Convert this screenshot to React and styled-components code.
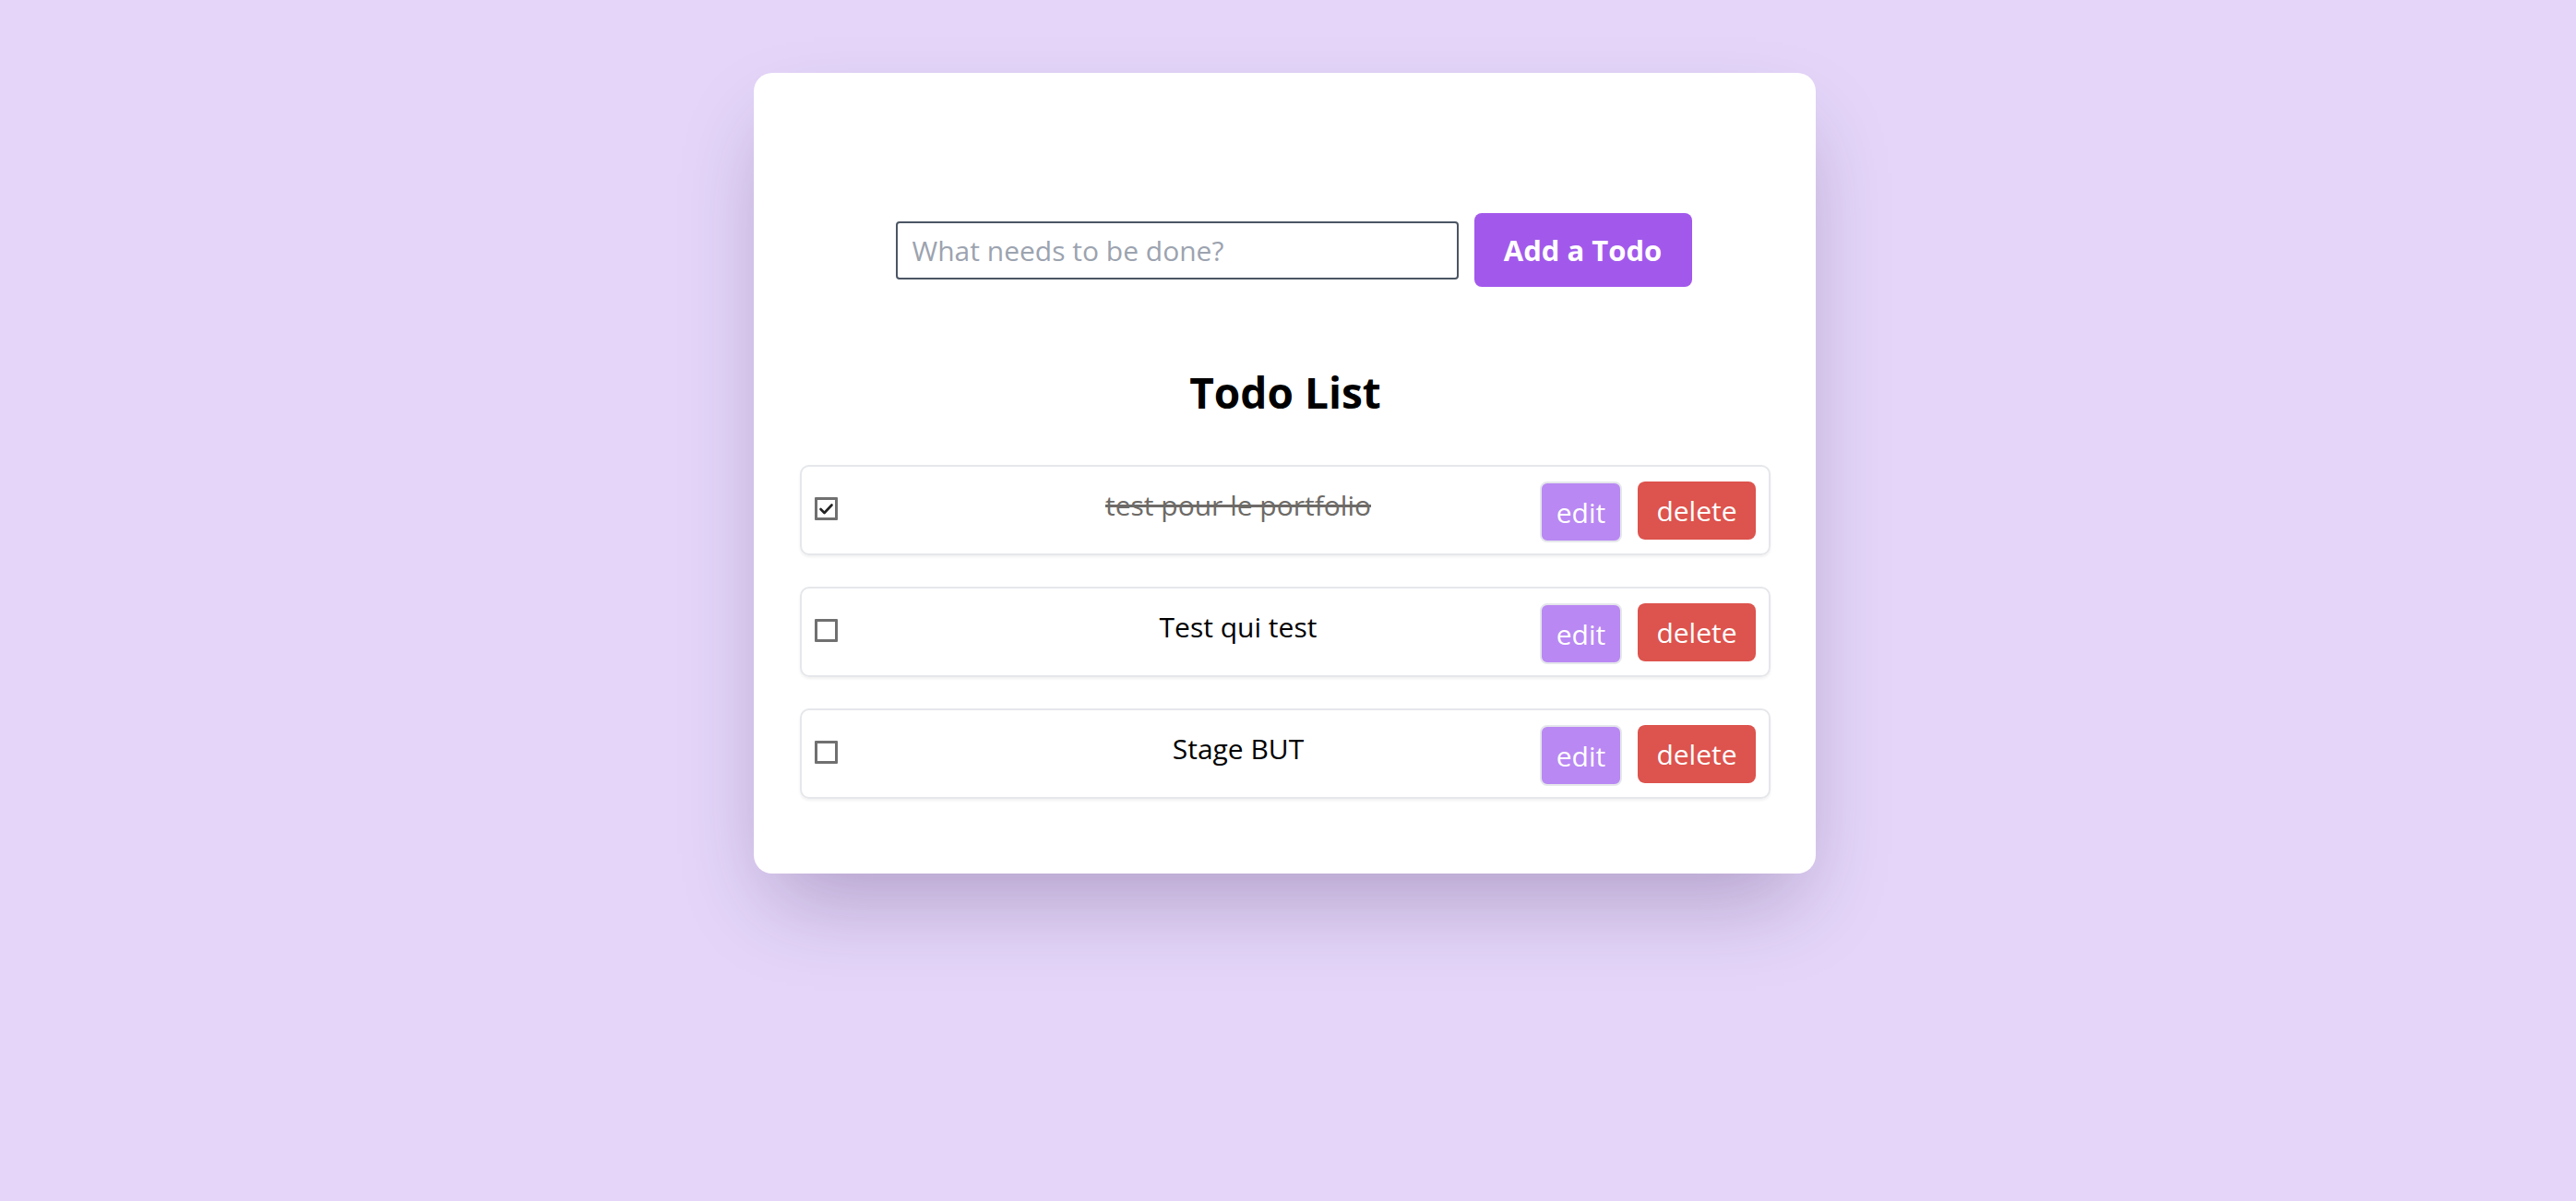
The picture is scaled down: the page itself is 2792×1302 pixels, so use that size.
import React from "react";
import styled, { createGlobalStyle } from "styled-components";

const GlobalStyle = createGlobalStyle`
  html, body {
    margin: 0;
    padding: 0;
    background: #e4d5f9;
    font-family: "Open Sans", "Noto Sans", Arial, sans-serif;
  }
  * { box-sizing: border-box; }
`;

const Page = styled.div`
  min-height: 1302px;
  display: flex;
  justify-content: center;
  align-items: flex-start;
  padding: 79px 7px 0 0;
`;

const Card = styled.div`
  width: 1151px;
  background: #ffffff;
  border-radius: 20px;
  padding: 152px 49px 81px 50px;
  box-shadow: 0 44px 90px -20px rgba(40, 10, 70, 0.28);
  display: flex;
  flex-direction: column;
`;

const Form = styled.form`
  display: flex;
  align-items: center;
  justify-content: center;
  gap: 17px;
  padding-left: 18px;
`;

const Input = styled.input`
  width: 610px;
  height: 63px;
  border: 2px solid #4b5563;
  border-radius: 4px;
  padding: 0 16px;
  font-family: "Open Sans", Arial, sans-serif;
  font-size: 30px;
  color: #111;
  outline: none;
  &::placeholder {
    color: #9ca3af;
  }
`;

const AddButton = styled.button`
  width: 236px;
  height: 80px;
  border: none;
  border-radius: 8px;
  background: #a259eb;
  color: #ffffff;
  font-family: "Open Sans", Arial, sans-serif;
  font-weight: 700;
  font-size: 31px;
  padding: 0;
  cursor: pointer;
`;

const Title = styled.h2`
  margin: 86px 0 51px;
  text-align: center;
  font-size: 46px;
  line-height: 56px;
  font-weight: 700;
  color: #000;
`;

const List = styled.ul`
  list-style: none;
  margin: 0;
  padding: 0;
  display: flex;
  flex-direction: column;
  gap: 34px;
`;

const Row = styled.li`
  height: 98px;
  border: 2px solid #e5e7eb;
  border-radius: 10px;
  box-shadow: 0 2px 3px rgba(0, 0, 0, 0.06);
  display: flex;
  align-items: center;
  padding: 0 14px;
`;

const Check = styled.span`
  width: 25px;
  height: 25px;
  flex: none;
  border: 3px solid #707070;
  border-radius: 1px;
  display: flex;
  align-items: center;
  justify-content: center;
  margin-top: -3px;
  background: #fff;
`;

const Text = styled.span`
  flex: 1;
  text-align: center;
  padding: 0 0 11px 107px;
  font-size: 30px;
  color: ${(p) => (p.$done ? "#6d6a67" : "#000")};
  text-decoration: ${(p) => (p.$done ? "line-through" : "none")};
  text-decoration-thickness: 3px;
`;

const Actions = styled.div`
  display: flex;
  align-items: center;
  gap: 17px;
`;

const ActionButton = styled.button`
  font-family: "Open Sans", Arial, sans-serif;
  font-size: 30px;
  color: #ffffff;
  border-radius: 8px;
  cursor: pointer;
  display: flex;
  align-items: center;
  justify-content: center;
  padding: 0;
  ${(p) =>
    p.$kind === "edit"
      ? `
    width: 89px;
    height: 66px;
    background: #b988f3;
    border: 2px solid #e5e7eb;
    margin-top: 4px;
  `
      : `
    width: 128px;
    height: 63px;
    background: #dd534d;
    border: none;
  `}
`;

const todos = [
  { id: 1, text: "test pour le portfolio", done: true },
  { id: 2, text: "Test qui test", done: false },
  { id: 3, text: "Stage BUT", done: false },
];

export default function App() {
  return (
    <>
      <GlobalStyle />
      <Page>
        <Card>
          <Form onSubmit={(e) => e.preventDefault()}>
            <Input placeholder="What needs to be done?" />
            <AddButton type="submit">Add a Todo</AddButton>
          </Form>
          <Title>Todo List</Title>
          <List>
            {todos.map((t) => (
              <Row key={t.id}>
                <Check>
                  {t.done && (
                    <svg width="17" height="17" viewBox="0 0 17 17">
                      <path
                        d="M2.5 9 L6.5 13 L14.5 4.5"
                        fill="none"
                        stroke="#222"
                        strokeWidth="2.6"
                        strokeLinecap="round"
                        strokeLinejoin="round"
                      />
                    </svg>
                  )}
                </Check>
                <Text $done={t.done}>{t.text}</Text>
                <Actions>
                  <ActionButton $kind="edit">edit</ActionButton>
                  <ActionButton $kind="delete">delete</ActionButton>
                </Actions>
              </Row>
            ))}
          </List>
        </Card>
      </Page>
    </>
  );
}
